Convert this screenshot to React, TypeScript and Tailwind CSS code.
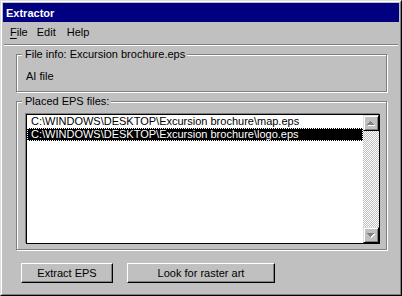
import * as React from "react";

const files = [
  "C:\\WINDOWS\\DESKTOP\\Excursion brochure\\map.eps",
  "C:\\WINDOWS\\DESKTOP\\Excursion brochure\\logo.eps",
];

function Arrow({ down }: { down?: boolean }) {
  // pixel triangle, 7x4, disabled look (gray with white emboss)
  const rows = down ? [7, 5, 3, 1] : [1, 3, 5, 7];
  const rects = (dx: number, dy: number, fill: string) =>
    rows.map((w, i) => <rect key={fill + i} x={(7 - w) / 2 + dx} y={i + dy} width={w} height={1} fill={fill} />);
  return (
    <svg width="8" height="5" viewBox="0 0 8 5" shapeRendering="crispEdges">
      {rects(1, 1, "#ffffff")}
      {rects(0, 0, "#808080")}
    </svg>
  );
}

function ScrollButton({ down }: { down?: boolean }) {
  return (
    <div className="flex h-[16px] w-[16px] shrink-0 items-center justify-center border border-t-[#dfdfdf] border-l-[#dfdfdf] border-r-black border-b-black bg-[#c0c0c0] shadow-[inset_1px_1px_0_#fff,inset_-1px_-1px_0_#808080]">
      <Arrow down={down} />
    </div>
  );
}

function Button({ className, children }: { className?: string; children: React.ReactNode }) {
  return (
    <button
      className={`flex h-[20px] items-center justify-center border border-t-white border-l-white border-r-black border-b-black bg-[#c0c0c0] shadow-[inset_-1px_-1px_0_#808080] ${className ?? ""}`}
    >
      {children}
    </button>
  );
}

export default function App() {
  return (
    <div className="h-[296px] w-[402px] border border-t-[#dfdfdf] border-l-[#dfdfdf] border-r-black border-b-black bg-[#c0c0c0] font-['Liberation_Sans',Arial,sans-serif] text-[11px] leading-[13px] text-black">
      <div className="flex h-full flex-col border border-t-white border-l-white border-r-[#808080] border-b-[#808080] p-px">
        <div className="h-[19px] shrink-0 bg-[#000080] pl-[3px] pt-[4px] font-bold text-white">Extractor</div>

        <div className="flex h-[19px] shrink-0 pl-[7px] pt-[4px]">
          <span>
            <span className="underline underline-offset-[2px]">F</span>ile
          </span>
          <span className="ml-[9px]">Edit</span>
          <span className="ml-[11px]">Help</span>
        </div>

        <div className="mx-px mt-[3px] h-[2px] shrink-0 border-t border-b border-t-[#808080] border-b-white" />

        <div className="flex flex-col px-[13px]">
          <fieldset className="mt-[2px] w-[371px] border border-[#808080] pb-[8px] pl-[5px] pt-[9px] shadow-[1px_1px_0_#fff,inset_1px_1px_0_#fff]">
            <legend className="bg-[#c0c0c0] pl-[3px] pr-[2px]">File info: Excursion brochure.eps</legend>
            <div className="ml-[4px]">AI file</div>
          </fieldset>

          <fieldset className="mt-[3px] w-[371px] border border-[#808080] pb-[5px] pl-[5px] pt-[6px] shadow-[1px_1px_0_#fff,inset_1px_1px_0_#fff]">
            <legend className="bg-[#c0c0c0] pl-[3px] pr-[2px]">Placed EPS files:</legend>
            <div className="ml-[4px] flex h-[130px] w-[354px] border border-black bg-white shadow-[-1px_-1px_0_#808080]">
              <div className="flex min-w-0 flex-1 flex-col">
                {files.map((f, i) => (
                  <div
                    key={f}
                    className={`h-[13px] whitespace-nowrap pl-[4px] ${
                      i === 1 ? "bg-black text-white outline-1 outline-dotted outline-offset-[-1px] outline-white" : ""
                    }`}
                  >
                    {f}
                  </div>
                ))}
              </div>
              <div className="flex w-[16px] flex-col">
                <ScrollButton />
                <div className="flex-1 bg-[repeating-conic-gradient(#c0c0c0_0_25%,#fff_0_50%)] bg-[length:2px_2px]" />
                <ScrollButton down />
              </div>
            </div>
          </fieldset>

          <div className="mt-[13px] flex">
            <Button className="ml-[5px] w-[92px]">Extract EPS</Button>
            <Button className="ml-[14px] w-[148px]">Look for raster art</Button>
          </div>
        </div>
      </div>
    </div>
  );
}
